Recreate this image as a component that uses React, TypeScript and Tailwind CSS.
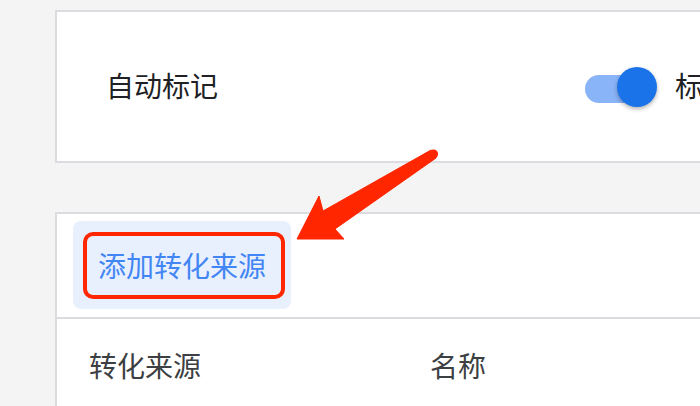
const cjk = { fontFamily: '"Noto Sans CJK SC", "Noto Sans", sans-serif' };

function Switch() {
  return (
    <div className="relative h-[40px] w-[72px] shrink-0">
      <div className="absolute left-0 top-[8px] h-[28px] w-[64px] rounded-full bg-[#8ab4f8]" />
      <div className="absolute left-[32px] top-0 h-[40px] w-[40px] rounded-full bg-[#1a73e8] shadow-[0_2px_4px_rgba(0,0,0,0.3)]" />
    </div>
  );
}

function Arrow() {
  return (
    <svg
      className="pointer-events-none absolute left-0 top-0"
      width="700"
      height="406"
      viewBox="0 0 700 406"
    >
      <polygon
        points="297,239 319,196 323,211 431,150 436,158 335,229 344,239"
        fill="#ff2600"
        stroke="#ff2600"
        strokeWidth="1"
        strokeLinejoin="round"
      />
      <circle cx="433.5" cy="154" r="4.6" fill="#ff2600" />
    </svg>
  );
}

export default function App() {
  return (
    <div className="relative h-[406px] w-[700px] overflow-hidden bg-[#f4f4f4]" style={cjk}>
      <div className="flex flex-col gap-[49px] pl-[55px] pt-[10px]">
        {/* Auto mark card */}
        <div className="flex h-[153px] w-[700px] items-center border-2 border-[#dcdce0] bg-white pl-[49px]">
          <div className="w-[479px] pb-[3px] text-[28px] text-[#202124]">自动标记</div>
          <Switch />
          <div className="ml-[18px] whitespace-nowrap pb-[3px] text-[28px] text-[#202124]">标签</div>
        </div>

        {/* Conversion sources card */}
        <div className="h-[300px] w-[700px] border-2 border-[#dcdce0] bg-white">
          <div className="border-b-2 border-[#dcdce0] pb-[8px] pl-[16px] pt-[7px]">
            <div className="relative flex h-[88px] w-[218px] items-center justify-center rounded-[8px] bg-[#e8f0fe] text-[28px] text-[#4285f4]">
              添加转化来源
              <div className="absolute left-[10px] top-[11px] h-[67px] w-[202px] rounded-[10px] border-4 border-[#ff2600]" />
            </div>
          </div>
          <div className="flex h-[92px] items-center pl-[32px] text-[28px] text-[#3c4043]">
            <div className="w-[341px]">转化来源</div>
            <div>名称</div>
          </div>
        </div>
      </div>
      <Arrow />
    </div>
  );
}
